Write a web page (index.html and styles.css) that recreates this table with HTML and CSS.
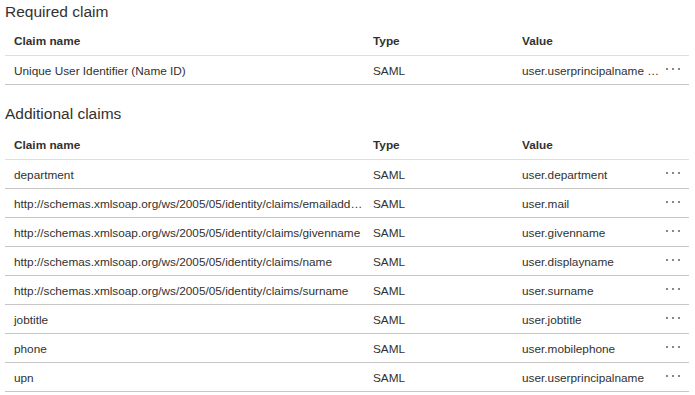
FILE: index.html
```html
<!DOCTYPE html>
<html lang="en">
<head>
  <meta charset="UTF-8" />
  <title>SAML claims</title>
  <link rel="stylesheet" href="styles.css">
</head>
<body>
  <section class="claims">
    <h2>Required claim</h2>
    <div class="grid">
      <div class="row head">
        <div class="cell">Claim name</div>
        <div class="cell">Type</div>
        <div class="cell">Value</div>
        <div class="cell"></div>
      </div>
      <div class="row">
        <div class="cell">Unique User Identifier (Name ID)</div>
        <div class="cell">SAML</div>
        <div class="cell">user.userprincipalname [nameid-format:emailAddress]</div>
        <div class="cell more"><svg width="16" height="4" viewBox="0 0 16 4"><circle cx="2" cy="2" r="1.1"/><circle cx="8" cy="2" r="1.1"/><circle cx="14" cy="2" r="1.1"/></svg></div>
      </div>
    </div>
  </section>

  <section class="claims extra">
    <h2>Additional claims</h2>
    <div class="grid">
      <div class="row head">
        <div class="cell">Claim name</div>
        <div class="cell">Type</div>
        <div class="cell">Value</div>
        <div class="cell"></div>
      </div>
      <div class="row">
        <div class="cell">department</div>
        <div class="cell">SAML</div>
        <div class="cell">user.department</div>
        <div class="cell more"><svg width="16" height="4" viewBox="0 0 16 4"><circle cx="2" cy="2" r="1.1"/><circle cx="8" cy="2" r="1.1"/><circle cx="14" cy="2" r="1.1"/></svg></div>
      </div>
      <div class="row">
        <div class="cell">http://schemas.xmlsoap.org/ws/2005/05/identity/claims/emailaddress</div>
        <div class="cell">SAML</div>
        <div class="cell">user.mail</div>
        <div class="cell more"><svg width="16" height="4" viewBox="0 0 16 4"><circle cx="2" cy="2" r="1.1"/><circle cx="8" cy="2" r="1.1"/><circle cx="14" cy="2" r="1.1"/></svg></div>
      </div>
      <div class="row">
        <div class="cell">http://schemas.xmlsoap.org/ws/2005/05/identity/claims/givenname</div>
        <div class="cell">SAML</div>
        <div class="cell">user.givenname</div>
        <div class="cell more"><svg width="16" height="4" viewBox="0 0 16 4"><circle cx="2" cy="2" r="1.1"/><circle cx="8" cy="2" r="1.1"/><circle cx="14" cy="2" r="1.1"/></svg></div>
      </div>
      <div class="row">
        <div class="cell">http://schemas.xmlsoap.org/ws/2005/05/identity/claims/name</div>
        <div class="cell">SAML</div>
        <div class="cell">user.displayname</div>
        <div class="cell more"><svg width="16" height="4" viewBox="0 0 16 4"><circle cx="2" cy="2" r="1.1"/><circle cx="8" cy="2" r="1.1"/><circle cx="14" cy="2" r="1.1"/></svg></div>
      </div>
      <div class="row">
        <div class="cell">http://schemas.xmlsoap.org/ws/2005/05/identity/claims/surname</div>
        <div class="cell">SAML</div>
        <div class="cell">user.surname</div>
        <div class="cell more"><svg width="16" height="4" viewBox="0 0 16 4"><circle cx="2" cy="2" r="1.1"/><circle cx="8" cy="2" r="1.1"/><circle cx="14" cy="2" r="1.1"/></svg></div>
      </div>
      <div class="row">
        <div class="cell">jobtitle</div>
        <div class="cell">SAML</div>
        <div class="cell">user.jobtitle</div>
        <div class="cell more"><svg width="16" height="4" viewBox="0 0 16 4"><circle cx="2" cy="2" r="1.1"/><circle cx="8" cy="2" r="1.1"/><circle cx="14" cy="2" r="1.1"/></svg></div>
      </div>
      <div class="row">
        <div class="cell">phone</div>
        <div class="cell">SAML</div>
        <div class="cell">user.mobilephone</div>
        <div class="cell more"><svg width="16" height="4" viewBox="0 0 16 4"><circle cx="2" cy="2" r="1.1"/><circle cx="8" cy="2" r="1.1"/><circle cx="14" cy="2" r="1.1"/></svg></div>
      </div>
      <div class="row">
        <div class="cell">upn</div>
        <div class="cell">SAML</div>
        <div class="cell">user.userprincipalname</div>
        <div class="cell more"><svg width="16" height="4" viewBox="0 0 16 4"><circle cx="2" cy="2" r="1.1"/><circle cx="8" cy="2" r="1.1"/><circle cx="14" cy="2" r="1.1"/></svg></div>
      </div>
    </div>
  </section>
</body>
</html>
```

FILE: styles.css
```css
body {
  margin: 0;
  padding: 0 6px 0 5px;
  background: #fff;
  color: #323130;
  font-family: 'Liberation Sans', Arial, sans-serif;
  font-size: 11.8px;
}

.claims h2 {
  margin: 0 0 2px;
  font-size: 15.5px;
  font-weight: 400;
  line-height: 24px;
}

.claims.extra {
  margin-top: 17px;
}

.claims.extra h2 {
  margin-bottom: 4px;
}

.row {
  display: grid;
  grid-template-columns: 359px 149px 149px 27px;
  padding-top: 2px;
  box-sizing: border-box;
  height: 29px;
  align-items: center;
  border-bottom: 1px solid #c8c6c4;
}

.row.head {
  height: 30px;
  padding-top: 0;
  font-weight: 700;
  border-bottom-color: #e1dfdd;
}

.cell {
  padding: 0 9px;
  white-space: nowrap;
  overflow: hidden;
  text-overflow: ellipsis;
  line-height: 16px;
}

.cell:first-child,
.cell:nth-child(3) {
  padding-right: 0;
}

.more {
  padding: 0 0 4px 3px;
  fill: #6e6b69;
  line-height: 0;
}
```
